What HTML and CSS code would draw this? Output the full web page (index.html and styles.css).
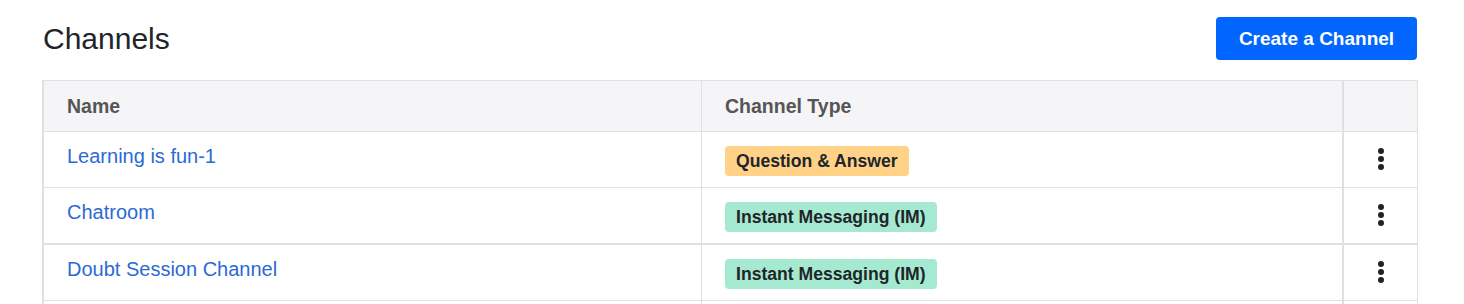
FILE: index.html
```html
<!DOCTYPE html>
<html lang="en">
<head>
    <meta charset="UTF-8">
    <meta name="viewport" content="width=device-width, initial-scale=1.0">
    <title>Channels</title>
    <link rel="stylesheet" href="styles.css">
</head>
<body>

    <!-- Page Header -->
    <div class="page">
        <div class="page-header">
            <h1>Channels</h1>
            <button type="button" class="create-btn">Create a Channel</button>
        </div>

        <!-- Channels Table -->
        <table class="channel-table">
            <thead>
                <tr>
                    <th class="col-name">Name</th>
                    <th class="col-type">Channel Type</th>
                    <th class="col-action"></th>
                </tr>
            </thead>
            <tbody>
                <tr>
                    <td><a href="#">Learning is fun-1</a></td>
                    <td><span class="badge badge-qa">Question &amp; Answer</span></td>
                    <td class="action"><span class="kebab"><i></i><i></i><i></i></span></td>
                </tr>
                <tr>
                    <td><a href="#">Chatroom</a></td>
                    <td><span class="badge badge-im">Instant Messaging (IM)</span></td>
                    <td class="action"><span class="kebab"><i></i><i></i><i></i></span></td>
                </tr>
                <tr class="row-split">
                    <td><a href="#">Doubt Session Channel</a></td>
                    <td><span class="badge badge-im">Instant Messaging (IM)</span></td>
                    <td class="action"><span class="kebab"><i></i><i></i><i></i></span></td>
                </tr>
                <tr class="row-more">
                    <td></td>
                    <td></td>
                    <td class="action"></td>
                </tr>
            </tbody>
        </table>
    </div>

</body>
</html>
```

FILE: styles.css
```css
/* General Styles */
body {
    font-family: "Liberation Sans", Arial, sans-serif;
    margin: 0;
    padding: 0;
    background-color: #ffffff;
    color: #212529;
}

.page {
    padding: 17px 47px 0 42px;
}

/* Header */
.page-header {
    display: flex;
    justify-content: space-between;
    align-items: center;
    height: 43px;
    margin-bottom: 20px;
}
.page-header h1 {
    margin: 0 0 0 1px;
    font-size: 30px;
    font-weight: normal;
    color: #212529;
}
.create-btn {
    width: 201px;
    height: 43px;
    background-color: #0066ff;
    color: white;
    border: none;
    border-radius: 4px;
    font-family: inherit;
    font-size: 19px;
    font-weight: bold;
    cursor: pointer;
}

/* Table */
.channel-table {
    width: 100%;
    border-collapse: collapse;
    table-layout: fixed;
    border-left: 2px solid #e1dfe4;
}
.channel-table th,
.channel-table td {
    border: 1px solid #e1dfe4;
    text-align: left;
    padding: 0 23px;
}
.channel-table th {
    height: 50px;
    background-color: #f5f4f7;
    color: #555555;
    font-size: 19.5px;
    font-weight: bold;
}
.col-name {
    width: 611px;
}
.col-type {
    width: 594px;
}
.col-action {
    width: 27px;
}
.channel-table th.col-action,
.channel-table td.action {
    border-left: 2px solid #e1dfe4;
}
.channel-table td {
    height: 55px;
    vertical-align: top;
}
.channel-table td a {
    display: block;
    padding-top: 12px;
    line-height: 24px;
    font-size: 20px;
    color: #2c6ad3;
    text-decoration: none;
}
.row-split td {
    border-top: 2px solid #e1dfe4;
}

/* Badges */
.badge {
    display: inline-block;
    margin-top: 14px;
    padding: 0 11px;
    height: 30px;
    line-height: 30px;
    border-radius: 4px;
    font-size: 17.6px;
    font-weight: bold;
    color: #212529;
}
.badge-qa {
    background-color: #ffd287;
}
.badge-im {
    background-color: #a5ead0;
}

/* Row menu */
.channel-table td.action {
    padding: 0;
    text-align: center;
}
.kebab {
    display: inline-flex;
    flex-direction: column;
    gap: 2px;
    margin-top: 16px;
}
.kebab i {
    display: block;
    width: 6px;
    height: 6px;
    border-radius: 50%;
    background-color: #222222;
}
```
